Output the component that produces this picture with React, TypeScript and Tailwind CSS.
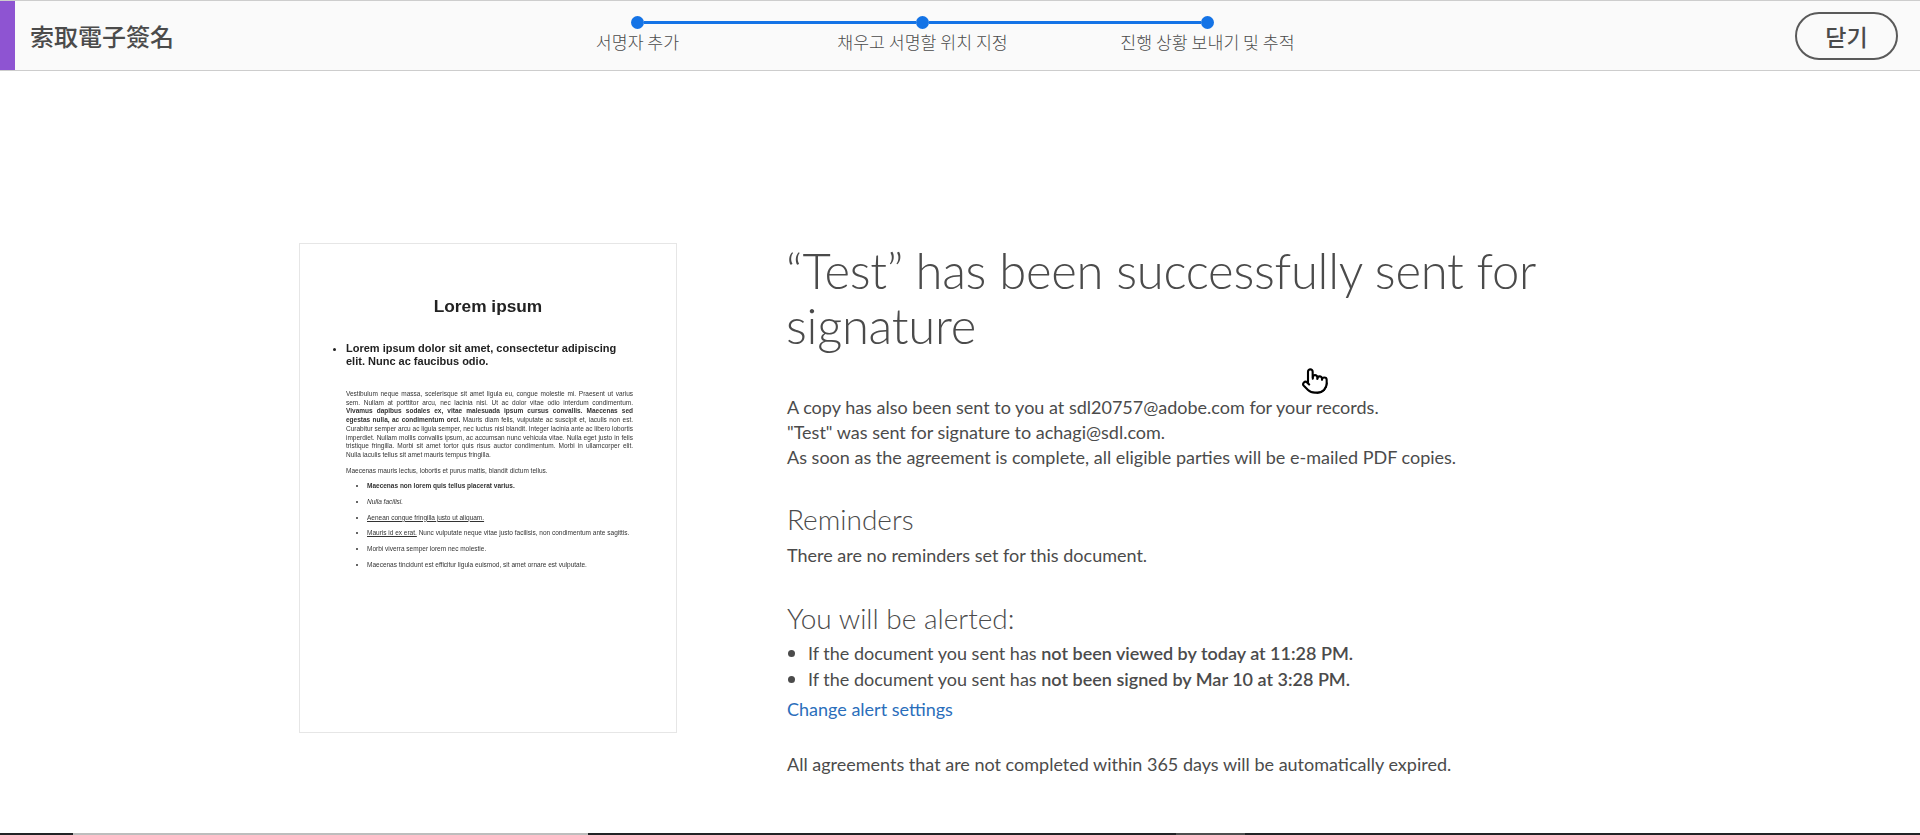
import React from 'react';
import { Pointer } from 'lucide-react';

const steps = ['서명자 추가', '채우고 서명할 위치 지정', '진행 상황 보내기 및 추적'];

const DocThumbnail: React.FC = () => (
  <div className="w-[378px] h-[490px] shrink-0 border border-[#e6e6e6] bg-white pt-[50px] pl-[33px] pr-[43px] text-[#222] font-['Liberation_Sans',Arial,sans-serif] blur-[0.45px]">
    <h2 className="text-center font-bold text-[17.3px] leading-[24px] pl-[10px]">Lorem ipsum</h2>
    <ul className="list-disc pl-[13px] mt-[24px] font-bold text-[11px] leading-[13px]">
      <li>Lorem ipsum dolor sit amet, consectetur adipiscing elit. Nunc ac faucibus odio.</li>
    </ul>
    <p className="ml-[13px] mt-[22px] text-[6.5px] leading-[8.7px] text-justify text-[#333]">
      Vestibulum neque massa, scelerisque sit amet ligula eu, congue molestie mi. Praesent ut varius sem. Nullam at
      porttitor arcu, nec lacinia nisi. Ut ac dolor vitae odio interdum condimentum.{' '}
      <b>Vivamus dapibus sodales ex, vitae malesuada ipsum cursus convallis. Maecenas sed egestas nulla, ac condimentum orci.</b>{' '}
      Mauris diam felis, vulputate ac suscipit et, iaculis non est. Curabitur semper arcu ac ligula semper, nec luctus
      nisl blandit. Integer lacinia ante ac libero lobortis imperdiet. Nullam mollis convallis ipsum, ac accumsan nunc
      vehicula vitae. Nulla eget justo in felis tristique fringilla. Morbi sit amet tortor quis risus auctor
      condimentum. Morbi in ullamcorper elit. Nulla iaculis tellus sit amet mauris tempus fringilla.
    </p>
    <p className="ml-[13px] mt-[7px] text-[6.5px] leading-[8.7px] text-[#333]">
      Maecenas mauris lectus, lobortis et purus mattis, blandit dictum tellus.
    </p>
    <ul className="ml-[25px] mt-[7px] flex flex-col gap-[7px] text-[6.5px] leading-[8.7px] text-[#333] list-disc pl-[9px]">
      <li><b>Maecenas non lorem quis tellus placerat varius.</b></li>
      <li><i>Nulla facilisi.</i></li>
      <li><u>Aenean congue fringilla justo ut aliquam.</u></li>
      <li><u>Mauris id ex erat.</u> Nunc vulputate neque vitae justo facilisis, non condimentum ante sagittis.</li>
      <li>Morbi viverra semper lorem nec molestie.</li>
      <li>Maecenas tincidunt est efficitur ligula euismod, sit amet ornare est vulputate.</li>
    </ul>
  </div>
);

export default function App() {
  return (
    <div className="relative h-[835px] flex flex-col bg-white overflow-hidden text-[#4b4b4b] font-['Lato','Open_Sans',sans-serif]">
      {/* Top bar */}
      <header className="h-[71px] shrink-0 flex bg-[#fafafa] border-y border-[#cdcdcd]">
        <div className="w-[15px] bg-[#8e54d2]" />
        <div className="w-[480px] pl-[15px] flex items-center">
          <span className="text-[24px] font-medium text-[#4b4b4b] font-['Noto_Sans_CJK_TC','Noto_Sans_CJK_SC',sans-serif]">
            索取電子簽名
          </span>
        </div>
        <div className="w-[855px] pt-[15px]">
          <div className="flex items-center mx-[136px]">
            <span className="w-[13px] h-[13px] rounded-full bg-[#1473e6] shrink-0" />
            <span className="flex-1 h-[3px] bg-[#1473e6]" />
            <span className="w-[13px] h-[13px] rounded-full bg-[#1473e6] shrink-0" />
            <span className="flex-1 h-[3px] bg-[#1473e6]" />
            <span className="w-[13px] h-[13px] rounded-full bg-[#1473e6] shrink-0" />
          </div>
          <div className="grid grid-cols-3 mt-[1px]">
            {steps.map((label) => (
              <span
                key={label}
                className="text-center text-[17.3px] leading-[24px] font-light text-[#4b4b4b] font-['Noto_Sans_CJK_KR',sans-serif]"
              >
                {label}
              </span>
            ))}
          </div>
        </div>
        <div className="ml-auto mr-[22px] flex items-center">
          <button className="w-[103px] h-[48px] rounded-full border-2 border-[#5a5a5a] text-[23px] leading-[40px] font-medium text-[#4b4b4b] font-['Noto_Sans_CJK_KR',sans-serif]">
            닫기
          </button>
        </div>
      </header>

      {/* Confirmation */}
      <main className="flex-1 flex pt-[172px] pl-[299px]">
        <DocThumbnail />
        <div className="ml-[110px] w-[800px]">
          <h1 className="text-[49px] leading-[55px] font-light text-[#4b4b4b] -ml-[1px] tracking-[-0.27px]">
            “Test” has been successfully sent for signature
          </h1>
          <div className="mt-[42px] text-[18px] leading-[25px]">
            <p>A copy has also been sent to you at sdl20757@adobe.com for your records.</p>
            <p>"Test" was sent for signature to achagi@sdl.com.</p>
            <p>As soon as the agreement is complete, all eligible parties will be e-mailed PDF copies.</p>
          </div>
          <h3 className="mt-[33px] text-[28px] leading-[32px] font-light">Reminders</h3>
          <p className="mt-[8px] text-[18px] leading-[25px]">There are no reminders set for this document.</p>
          <h3 className="mt-[34px] text-[28px] leading-[32px] font-light">You will be alerted:</h3>
          <ul className="mt-[6px] text-[18px] leading-[26px]">
            <li className="flex items-center">
              <span className="w-[7px] h-[7px] rounded-full bg-[#4b4b4b] mr-[13px] ml-[1px]" />
              <span>If the document you sent has <b className="font-semibold">not been viewed by today at 11:28 PM.</b></span>
            </li>
            <li className="flex items-center">
              <span className="w-[7px] h-[7px] rounded-full bg-[#4b4b4b] mr-[13px] ml-[1px]" />
              <span>If the document you sent has <b className="font-semibold">not been signed by Mar 10 at 3:28 PM.</b></span>
            </li>
          </ul>
          <a className="block mt-[5px] text-[18px] leading-[25px] text-[#2a6ebb]">Change alert settings</a>
          <p className="mt-[30px] text-[18px] leading-[25px]">All agreements that are not completed within 365 days will be automatically expired.</p>
        </div>
      </main>

      {/* Strip of the window below */}
      <div className="h-[2px] shrink-0 flex bg-[#222326]">
        <div className="w-[73px]" />
        <div className="w-[515px] bg-[#bdbdbd]" />
        <div className="w-[588px]" />
        <div className="w-[69px] bg-[#4f4f4f]" />
      </div>

      {/* Mouse pointer */}
      <Pointer className="absolute left-[1301px] top-[367px] w-[28px] h-[28px] text-black fill-white" strokeWidth={1.8} />
    </div>
  );
}
